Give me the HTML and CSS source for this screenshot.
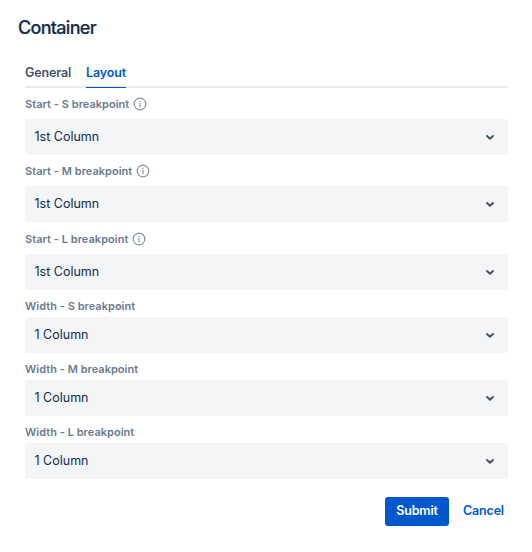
FILE: index.html
```html
<!DOCTYPE html>
<html lang="en">
<head>
<meta charset="utf-8">
<title>Container</title>
<link rel="stylesheet" href="styles.css">
</head>
<body>
<svg class="defs" width="0" height="0">
  <symbol id="info" viewBox="0 0 14 14"><circle cx="7" cy="7" r="5.8" fill="none" stroke="currentColor" stroke-width="1.2"/><path d="M7 6v4.2M7 3.8v1.2" fill="none" stroke="currentColor" stroke-width="1.2"/></symbol>
  <symbol id="chevron" viewBox="0 0 10 8"><path d="M2 3 5 5.7 8 3" fill="none" stroke="currentColor" stroke-width="1.9" stroke-linecap="round" stroke-linejoin="round"/></symbol>
</svg>
<main class="dialog">
  <h1 class="title">Container</h1>
  <nav class="tabs"><span class="tab">General</span><span class="tab active">Layout</span></nav>
  <form class="fields">
    <div class="field start"><label class="label">Start - S breakpoint <svg class="info"><use href="#info"/></svg></label><div class="select"><span class="value">1st Column</span><svg class="chevron"><use href="#chevron"/></svg></div></div>
    <div class="field start"><label class="label">Start - M breakpoint <svg class="info"><use href="#info"/></svg></label><div class="select"><span class="value">1st Column</span><svg class="chevron"><use href="#chevron"/></svg></div></div>
    <div class="field start last"><label class="label">Start - L breakpoint <svg class="info"><use href="#info"/></svg></label><div class="select"><span class="value">1st Column</span><svg class="chevron"><use href="#chevron"/></svg></div></div>
    <div class="field"><label class="label">Width - S breakpoint</label><div class="select"><span class="value">1 Column</span><svg class="chevron"><use href="#chevron"/></svg></div></div>
    <div class="field"><label class="label">Width - M breakpoint</label><div class="select"><span class="value">1 Column</span><svg class="chevron"><use href="#chevron"/></svg></div></div>
    <div class="field"><label class="label">Width - L breakpoint</label><div class="select"><span class="value">1 Column</span><svg class="chevron"><use href="#chevron"/></svg></div></div>
  </form>
  <footer class="actions"><button class="button primary">Submit</button><button class="button link">Cancel</button></footer>
</main>
</body>
</html>
```
FILE: styles.css
```css
* { box-sizing: border-box; }
body { margin: 0; background: #fff; color: #102c4c; font-family: Inter, "Liberation Sans", sans-serif; font-size: 12.5px; }
.defs { display: block; }
.dialog { padding: 17px 24px 0 25px; }
.title { margin: 0 0 0 -7px; font-size: 18px; line-height: 22px; font-weight: 500; letter-spacing: -0.7px; -webkit-text-stroke: 0.2px; }
.tabs { display: flex; gap: 15px; height: 29px; margin-top: 20px; border-bottom: 2px solid #ebecf0; }
.tab { height: 29px; line-height: 27px; font-weight: 600; letter-spacing: -0.14px; color: #42526e; }
.tab.active { color: #0058cc; border-bottom: 1px solid #0058cc; }
.label { display: flex; align-items: center; gap: 4px; height: 23px; color: #6b7a8f; font-size: 11px; font-weight: 600; letter-spacing: 0.03px; }
.field { height: 63px; }
.field.start { height: 67px; padding-top: 5px; }
.start .label { height: 26px; padding-bottom: 4px; }
.field.last { height: 72px; padding-top: 6px; }
.info { width: 14px; height: 14px; color: #8993a4; }
.select { display: flex; align-items: center; justify-content: space-between; height: 36px; padding: 0 13px 0 9.5px; border-radius: 3px; background: #f4f5f7; }
.value { padding-bottom: 1px; }
.chevron { width: 10px; height: 8px; color: #42526e; }
.actions { display: flex; justify-content: flex-end; margin-top: 14px; }
.button { height: 29px; border: 0; border-radius: 3px; font: 600 12.5px Inter, sans-serif; letter-spacing: -0.17px; padding: 0 0 2px; }
.primary { width: 64px; background: #0058cc; color: #fff; }
.link { width: 59px; margin-left: 5px; background: none; color: #0058cc; margin-right: -5px; }
```
